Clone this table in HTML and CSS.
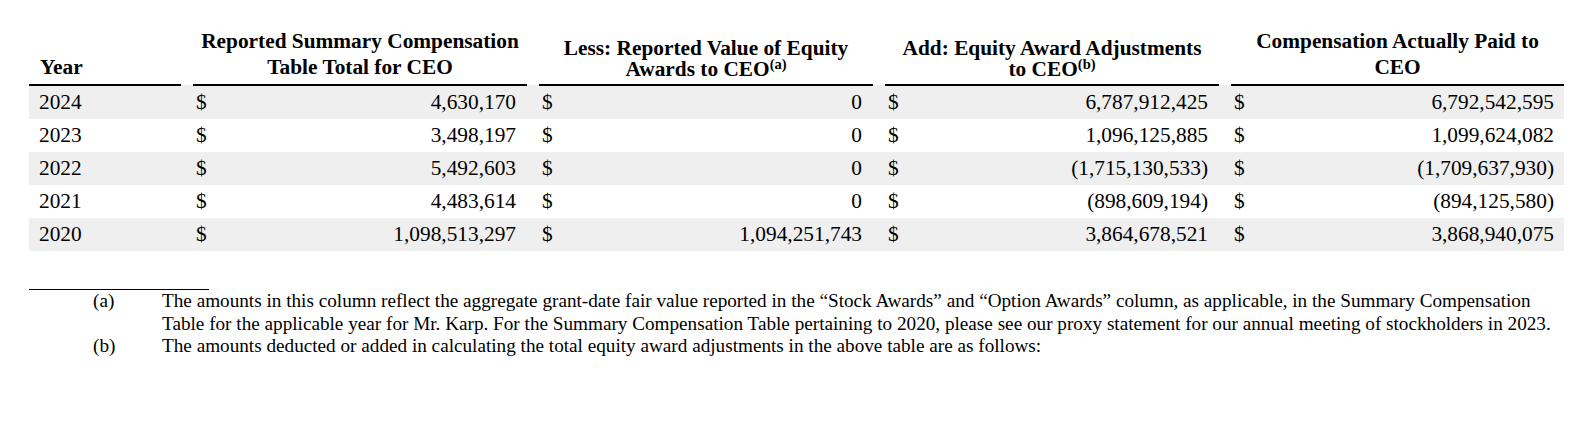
FILE: index.html
```html
<!DOCTYPE html>
<html lang="en">
<head>
<meta charset="utf-8">
<title>Compensation Actually Paid</title>
<link rel="stylesheet" href="styles.css">
</head>
<body>
<div class="page">
  <table class="comp">
    <colgroup>
      <col class="c-year">
      <col class="c-gap">
      <col class="c-cur"><col class="c-num">
      <col class="c-gap">
      <col class="c-cur"><col class="c-num">
      <col class="c-gap">
      <col class="c-cur"><col class="c-num">
      <col class="c-gap">
      <col class="c-cur"><col class="c-num-last">
    </colgroup>
    <thead>
      <tr>
        <th class="h-year">Year</th>
        <th class="gap"></th>
        <th class="h" colspan="2">Reported Summary Compensation<br>Table Total for CEO</th>
        <th class="gap"></th>
        <th class="h tight" colspan="2">Less: Reported Value of Equity<br>Awards to CEO<sup>(a)</sup></th>
        <th class="gap"></th>
        <th class="h tight" colspan="2">Add: Equity Award Adjustments<br>to CEO<sup>(b)</sup></th>
        <th class="gap"></th>
        <th class="h" colspan="2">Compensation Actually Paid to<br>CEO</th>
      </tr>
    </thead>
    <tbody>
      <tr class="shade">
        <td class="year">2024</td><td></td>
        <td class="cur">$</td><td class="num">4,630,170</td><td></td>
        <td class="cur">$</td><td class="num">0</td><td></td>
        <td class="cur">$</td><td class="num">6,787,912,425</td><td></td>
        <td class="cur">$</td><td class="num last">6,792,542,595</td>
      </tr>
      <tr>
        <td class="year">2023</td><td></td>
        <td class="cur">$</td><td class="num">3,498,197</td><td></td>
        <td class="cur">$</td><td class="num">0</td><td></td>
        <td class="cur">$</td><td class="num">1,096,125,885</td><td></td>
        <td class="cur">$</td><td class="num last">1,099,624,082</td>
      </tr>
      <tr class="shade">
        <td class="year">2022</td><td></td>
        <td class="cur">$</td><td class="num">5,492,603</td><td></td>
        <td class="cur">$</td><td class="num">0</td><td></td>
        <td class="cur">$</td><td class="num">(1,715,130,533)</td><td></td>
        <td class="cur">$</td><td class="num last">(1,709,637,930)</td>
      </tr>
      <tr>
        <td class="year">2021</td><td></td>
        <td class="cur">$</td><td class="num">4,483,614</td><td></td>
        <td class="cur">$</td><td class="num">0</td><td></td>
        <td class="cur">$</td><td class="num">(898,609,194)</td><td></td>
        <td class="cur">$</td><td class="num last">(894,125,580)</td>
      </tr>
      <tr class="shade">
        <td class="year">2020</td><td></td>
        <td class="cur">$</td><td class="num">1,098,513,297</td><td></td>
        <td class="cur">$</td><td class="num">1,094,251,743</td><td></td>
        <td class="cur">$</td><td class="num">3,864,678,521</td><td></td>
        <td class="cur">$</td><td class="num last">3,868,940,075</td>
      </tr>
    </tbody>
  </table>

  <div class="notes">
    <div class="rule"></div>
    <div class="note">
      <span class="mark">(a)</span>
      <p class="note-text">The amounts in this column reflect the aggregate grant-date fair value reported in the “Stock Awards” and “Option Awards” column, as applicable, in the Summary Compensation<br>Table for the applicable year for Mr. Karp. For the Summary Compensation Table pertaining to 2020, please see our proxy statement for our annual meeting of stockholders in 2023.</p>
    </div>
    <div class="note">
      <span class="mark">(b)</span>
      <p class="note-text">The amounts deducted or added in calculating the total equity award adjustments in the above table are as follows:</p>
    </div>
  </div>
</div>
</body>
</html>
```

FILE: styles.css
```css
html, body {
  margin: 0;
  padding: 0;
  background: #ffffff;
}

.page {
  padding: 28px 0 0 29px;
  font-family: "Liberation Serif", "Times New Roman", serif;
  color: #000000;
}

.comp {
  table-layout: fixed;
  border-collapse: collapse;
  border-spacing: 0;
  width: 1535px;
  font-size: 21.33px;
}

.c-year { width: 152px; }
.c-gap { width: 12px; }
.c-cur { width: 24px; }
.c-num { width: 310px; }
.c-num-last { width: 309px; }

.comp th {
  font-weight: bold;
  vertical-align: bottom;
  padding: 0 0 4px 0;
  line-height: 26px;
}

.comp th.h-year {
  text-align: left;
  padding-left: 11px;
  border-bottom: 2px solid #000000;
}

.comp th.h {
  text-align: center;
  border-bottom: 2px solid #000000;
}

.comp th.tight {
  line-height: 21px;
}

.comp th.gap {
  border-bottom: none;
}

.comp sup {
  font-size: 14.5px;
  line-height: 0;
  vertical-align: 7px;
}

.comp td {
  padding: 4px 0;
  line-height: 25px;
  white-space: nowrap;
}

.comp tr.shade td {
  background: #efefef;
}

.comp td.year {
  padding-left: 10px;
}

.comp td.cur {
  padding-left: 3px;
}

.comp td.num {
  text-align: right;
  padding-right: 11px;
}

.comp td.num.last {
  padding-right: 10px;
}

.notes {
  margin-top: 38px;
  font-size: 19.2px;
  line-height: 22.5px;
}

.rule {
  width: 180px;
  height: 1px;
  background: #000000;
}

.note {
  display: flex;
  align-items: flex-start;
}

.mark {
  flex: 0 0 auto;
  width: 69px;
  padding-left: 64px;
}

.note-text {
  margin: 0;
  white-space: nowrap;
}
```
